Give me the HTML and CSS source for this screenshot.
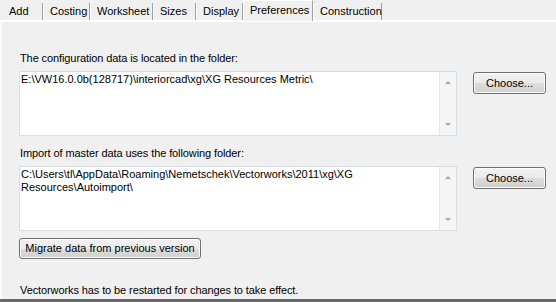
FILE: index.html
```html
<html lang="en">
<head>
    <meta charset="UTF-8">
    <title>Preferences</title>
    <link rel="stylesheet" href="styles.css">
</head>
<body>
<div class="dialog">
    <ul class="tabs">
        <li class="t-add">Add</li>
        <li class="t-costing">Costing</li>
        <li class="t-worksheet">Worksheet</li>
        <li class="t-sizes">Sizes</li>
        <li class="t-display">Display</li>
        <li class="t-prefs active">Preferences</li>
        <li class="t-construction">Construction</li>
    </ul>

    <div class="panel">
        <div class="label first">The configuration data is located in the folder:</div>
        <div class="row">
            <div class="field">
                <div class="text">E:\VW16.0.0b(128717)\interiorcad\xg\XG Resources Metric\</div>
                <div class="scroll">
                    <span class="up"></span>
                    <span class="down"></span>
                </div>
            </div>
            <div class="btn choose">Choose...</div>
        </div>

        <div class="label">Import of master data uses the following folder:</div>
        <div class="row">
            <div class="field">
                <div class="text">C:\Users\tl\AppData\Roaming\Nemetschek\Vectorworks\2011\xg\XG Resources\Autoimport\</div>
                <div class="scroll">
                    <span class="up"></span>
                    <span class="down"></span>
                </div>
            </div>
            <div class="btn choose">Choose...</div>
        </div>

        <div class="btn migrate">Migrate data from previous version</div>

        <div class="note">Vectorworks has to be restarted for changes to take effect.</div>
    </div>
</div>
</body>
</html>
```

FILE: styles.css
```css
* {
    margin: 0;
    padding: 0;
    box-sizing: border-box;
}

ul {
    list-style: none;
}

body {
    background: #f0f0f0;
    font-family: "Liberation Sans", Arial, sans-serif;
    font-size: 11px;
    color: #000;
    width: 556px;
    height: 302px;
    overflow: hidden;
}

.dialog {
    height: 302px;
    display: flex;
    flex-direction: column;
    border-bottom: 3px solid #696969;
}

/* tabs */
.tabs {
    display: flex;
    height: 21px;
    padding-left: 2px;
    align-items: flex-end;
    border-bottom: 1px solid #fff;
    box-shadow: 0 1px 0 #fff;
}

.tabs li {
    height: 17px;
    line-height: 16px;
    padding-left: 6px;
    border-left: 1px solid #fff;
    border-right: 1px solid #a0a0a0;
    white-space: nowrap;
}

.tabs li.t-add {
    border-left-color: transparent;
}

.tabs li.active {
    height: 21px;
    line-height: 18px;
    background: #f0f0f0;
    border-top: 1px solid #fff;
    margin-bottom: -1px;
}

.t-add { width: 41px; }
.t-costing { width: 47px; }
.t-worksheet { width: 63px; }
.t-sizes { width: 43px; }
.t-display { width: 47px; }
.t-prefs { width: 70px; }
.t-construction { width: 69px; }

/* panel */
.panel {
    flex: 1;
    padding-left: 17px;
    border-left: 2px solid #fafafa;
    display: flex;
    flex-direction: column;
}

.label {
    height: 13px;
    line-height: 13px;
    margin: 11px 0 6px 1px;
    letter-spacing: -0.1px;
}

.label.first {
    margin-top: 31px;
}

.row {
    display: flex;
    align-items: flex-start;
}

.field {
    width: 438px;
    height: 65px;
    background: #fff;
    border: 1px solid #d5dfe5;
    display: flex;
    padding: 1px 0 0 1px;
}

.field .text {
    flex: 1;
    line-height: 13px;
    padding-right: 4px;
}

.scroll {
    width: 17px;
    margin-top: -1px;
    height: 63px;
    background: #f5f5f5;
    border-left: 1px solid #e6e6e6;
    position: relative;
}

.scroll span {
    position: absolute;
    left: 5px;
    width: 0;
    height: 0;
    border-left: 3px solid transparent;
    border-right: 3px solid transparent;
}

.scroll .up {
    top: 9px;
    border-bottom: 3px solid #a6a6a6;
}

.scroll .down {
    bottom: 9px;
    border-top: 3px solid #a6a6a6;
}

.btn {
    height: 22px;
    line-height: 20px;
    text-align: center;
    border: 1px solid #707070;
    border-radius: 3px;
    background: linear-gradient(#f2f2f2 0%, #ebebeb 50%, #dddddd 51%, #cfcfcf 100%);
    box-shadow: inset 0 0 0 1px #fcfcfc;
}

.choose {
    width: 73px;
    margin: 1px 0 0 16px;
}

.migrate {
    width: 182px;
    height: 21px;
    line-height: 19px;
    margin-top: 7px;
}

.note {
    margin: 25px 0 0 1px;
    height: 13px;
    line-height: 13px;
    letter-spacing: -0.1px;
}
```
